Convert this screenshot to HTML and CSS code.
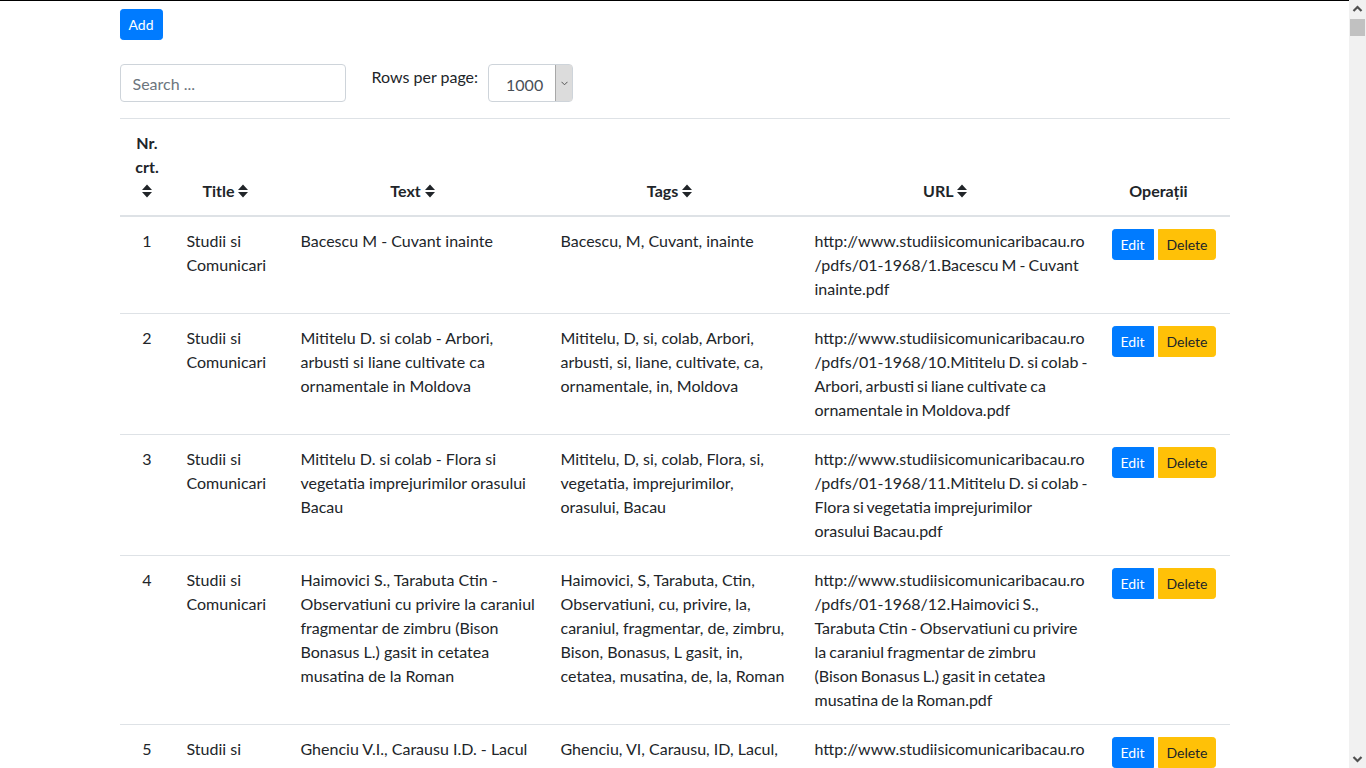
FILE: index.html
```html
<!DOCTYPE html>
<html lang="ro">
<head>
<meta charset="utf-8">
<title>Articole</title>
<link rel="stylesheet" href="styles.css">
</head>
<body>
<div class="container">
  <button class="btn btn-primary btn-sm">Add</button>
  <div class="toolbar">
    <input class="form-control search" type="text" placeholder="Search ...">
    <label class="rows-label" for="rows">Rows per page:</label>
    <div class="select-wrap">
      <select id="rows" class="rows-select">
        <option>1000</option>
      </select>
      <span class="select-arrow"><svg width="7" height="5" viewBox="0 0 7 5"><path d="M0.5 0.8 L3.5 3.8 L6.5 0.8" fill="none" stroke="#555" stroke-width="1"/></svg></span>
    </div>
  </div>
  <table class="table">
    <colgroup>
      <col class="c-nr"><col class="c-title"><col class="c-text"><col class="c-tags"><col class="c-url"><col class="c-ops">
    </colgroup>
    <thead>
      <tr>
        <th class="th-nr">Nr. crt. <svg class="sort" viewBox="0 0 10 14"><path d="M0 6 L5 0.5 L10 6 Z M0 8 L10 8 L5 13.5 Z"/></svg></th>
        <th>Title <svg class="sort" viewBox="0 0 10 14"><path d="M0 6 L5 0.5 L10 6 Z M0 8 L10 8 L5 13.5 Z"/></svg></th>
        <th>Text <svg class="sort" viewBox="0 0 10 14"><path d="M0 6 L5 0.5 L10 6 Z M0 8 L10 8 L5 13.5 Z"/></svg></th>
        <th>Tags <svg class="sort" viewBox="0 0 10 14"><path d="M0 6 L5 0.5 L10 6 Z M0 8 L10 8 L5 13.5 Z"/></svg></th>
        <th>URL <svg class="sort" viewBox="0 0 10 14"><path d="M0 6 L5 0.5 L10 6 Z M0 8 L10 8 L5 13.5 Z"/></svg></th>
        <th>Operații</th>
      </tr>
    </thead>
    <tbody>
      <tr>
        <td class="nr">1</td>
        <td>Studii si Comunicari</td>
        <td>Bacescu M - Cuvant inainte</td>
        <td>Bacescu, M, Cuvant, inainte</td>
        <td class="url">http://www.studiisicomunicaribacau.ro/pdfs/01-1968/1.Bacescu M - Cuvant inainte.pdf</td>
        <td><div class="ops"><button class="btn btn-primary btn-sm first">Edit</button><button class="btn btn-warning btn-sm last">Delete</button></div></td>
      </tr>
      <tr>
        <td class="nr">2</td>
        <td>Studii si Comunicari</td>
        <td>Mititelu D. si colab - Arbori, arbusti si liane cultivate ca ornamentale in Moldova</td>
        <td>Mititelu, D, si, colab, Arbori, arbusti, si, liane, cultivate, ca, ornamentale, in, Moldova</td>
        <td class="url">http://www.studiisicomunicaribacau.ro/pdfs/01-1968/10.Mititelu D. si colab - Arbori, arbusti si liane cultivate ca ornamentale in Moldova.pdf</td>
        <td><div class="ops"><button class="btn btn-primary btn-sm first">Edit</button><button class="btn btn-warning btn-sm last">Delete</button></div></td>
      </tr>
      <tr>
        <td class="nr">3</td>
        <td>Studii si Comunicari</td>
        <td>Mititelu D. si colab - Flora si vegetatia imprejurimilor orasului Bacau</td>
        <td>Mititelu, D, si, colab, Flora, si, vegetatia, imprejurimilor, orasului, Bacau</td>
        <td class="url">http://www.studiisicomunicaribacau.ro/pdfs/01-1968/11.Mititelu D. si colab - Flora si vegetatia imprejurimilor orasului Bacau.pdf</td>
        <td><div class="ops"><button class="btn btn-primary btn-sm first">Edit</button><button class="btn btn-warning btn-sm last">Delete</button></div></td>
      </tr>
      <tr>
        <td class="nr">4</td>
        <td>Studii si Comunicari</td>
        <td>Haimovici S., Tarabuta Ctin - Observatiuni cu privire la caraniul fragmentar de zimbru (Bison Bonasus L.) gasit in cetatea musatina de la Roman</td>
        <td>Haimovici, S, Tarabuta, Ctin, Observatiuni, cu, privire, la, caraniul, fragmentar, de, zimbru, Bison, Bonasus, L gasit, in, cetatea, musatina, de, la, Roman</td>
        <td class="url">http://www.studiisicomunicaribacau.ro/pdfs/01-1968/12.Haimovici S., Tarabuta Ctin - Observatiuni cu privire la caraniul fragmentar de zimbru (Bison&nbsp;Bonasus L.) gasit in cetatea musatina de la Roman.pdf</td>
        <td><div class="ops"><button class="btn btn-primary btn-sm first">Edit</button><button class="btn btn-warning btn-sm last">Delete</button></div></td>
      </tr>
      <tr>
        <td class="nr">5</td>
        <td>Studii si Comunicari</td>
        <td>Ghenciu V.I., Carausu I.D. - Lacul de acumulare de la Bicaz si importanta lui</td>
        <td>Ghenciu, VI, Carausu, ID, Lacul, de, acumulare, de, la, Bicaz, si, importanta, lui</td>
        <td class="url">http://www.studiisicomunicaribacau.ro/pdfs/01-1968/13.Ghenciu V.I., Carausu I.D. - Lacul de acumulare de la Bicaz si importanta lui.pdf</td>
        <td><div class="ops"><button class="btn btn-primary btn-sm first">Edit</button><button class="btn btn-warning btn-sm last">Delete</button></div></td>
      </tr>
    </tbody>
  </table>
</div>
<div class="scrollbar" aria-hidden="true">
  <span class="sb-btn"><svg width="17" height="17" viewBox="0 0 17 17"><path d="M4.5 11 L8.5 7 L12.5 11" fill="none" stroke="#505050" stroke-width="2.2"/></svg></span>
  <span class="sb-track"><span class="sb-thumb"></span></span>
  <span class="sb-btn"><svg width="17" height="17" viewBox="0 0 17 17"><path d="M4.5 6 L8.5 10 L12.5 6" fill="none" stroke="#505050" stroke-width="2.2"/></svg></span>
</div>
</body>
</html>
```
FILE: styles.css
```css
* { box-sizing: border-box; }
html { scrollbar-width: none; }
html::-webkit-scrollbar { display: none; }
body {
  margin: 0 17px 0 0;
  border-top: 1px solid #000;
  font-family: Lato, "Liberation Sans", sans-serif;
  font-size: 16px;
  line-height: 1.5;
  color: #212529;
  background: #fff;
}
.container {
  max-width: 1140px;
  margin: 0 auto;
  padding: 8px 15px 0;
}
.btn {
  display: inline-block;
  font-family: inherit;
  border: 1px solid transparent;
  border-radius: 3.2px;
  cursor: pointer;
}
.btn-sm { font-size: 14px; line-height: 21px; padding: 4px 8px; }
.btn-primary { background: #007bff; border-color: #007bff; color: #fff; }
.btn-warning { background: #ffc107; border-color: #ffc107; color: #212529; }
.toolbar {
  display: flex;
  align-items: flex-start;
  margin: 24px 0 16px;
}
.form-control {
  font-family: inherit;
  font-size: 16px;
  line-height: 24px;
  color: #495057;
  border: 1px solid #ced4da;
  border-radius: 4px;
  padding: 6px 12px;
  height: 38px;
  background: #fff;
}
.search { width: 226px; }
.search::placeholder { color: #6c757d; }
.rows-label { margin-left: 26px; margin-right: 9px; padding-top: 1px; }
.select-wrap { position: relative; width: 85px; height: 38px; margin-left: 1px; }
.rows-select {
  appearance: none;
  -webkit-appearance: none;
  width: 85px;
  height: 38px;
  font-family: inherit;
  font-size: 16px;
  line-height: 24px;
  color: #495057;
  border: 1px solid #ced4da;
  border-radius: 4px;
  padding: 3px 0 0 17px;
  background: #fff;
}
.select-arrow {
  position: absolute;
  top: 1px;
  right: 1px;
  width: 17px;
  height: 36px;
  background: #dcdcdc;
  border-left: 1px solid #a8a8a8;
  display: flex;
  align-items: center;
  justify-content: center;
  pointer-events: none;
}
.table {
  width: 100%;
  border-collapse: collapse;
  table-layout: fixed;
}
.c-nr { width: 55px; }
.c-title { width: 114px; }
.c-text { width: 260px; }
.c-tags { width: 254px; }
.c-url { width: 297px; }
.c-ops { width: 130px; }
.table th, .table td {
  padding: 12px;
  border-top: 1px solid #dee2e6;
  vertical-align: top;
  text-align: left;
}
.table thead th {
  vertical-align: bottom;
  border-bottom: 2px solid #dee2e6;
  text-align: center;
  font-weight: 700;
  padding-right: 24px;
}
.table thead th.th-nr { padding-right: 12px; }
.sort { width: 10px; height: 14px; fill: #212529; vertical-align: -1px; }
.table td.nr { text-align: center; }
.url { overflow-wrap: anywhere; word-spacing: -1px; }
.ops { display: flex; gap: 4px; }
.ops .first { border-radius: 3.2px 0 0 3.2px; }
.ops .last { border-radius: 0 3.2px 3.2px 0; }
.scrollbar {
  position: fixed;
  top: 0;
  right: 0;
  bottom: 0;
  width: 17px;
  background: #f1f1f1;
  display: flex;
  flex-direction: column;
  z-index: 5;
}
.sb-btn { display: block; height: 17px; flex: none; }
.sb-btn svg { display: block; }
.sb-track { flex: 1; display: block; padding: 2px 1px 0; }
.sb-thumb { display: block; height: 17px; background: #c1c1c1; }
```
